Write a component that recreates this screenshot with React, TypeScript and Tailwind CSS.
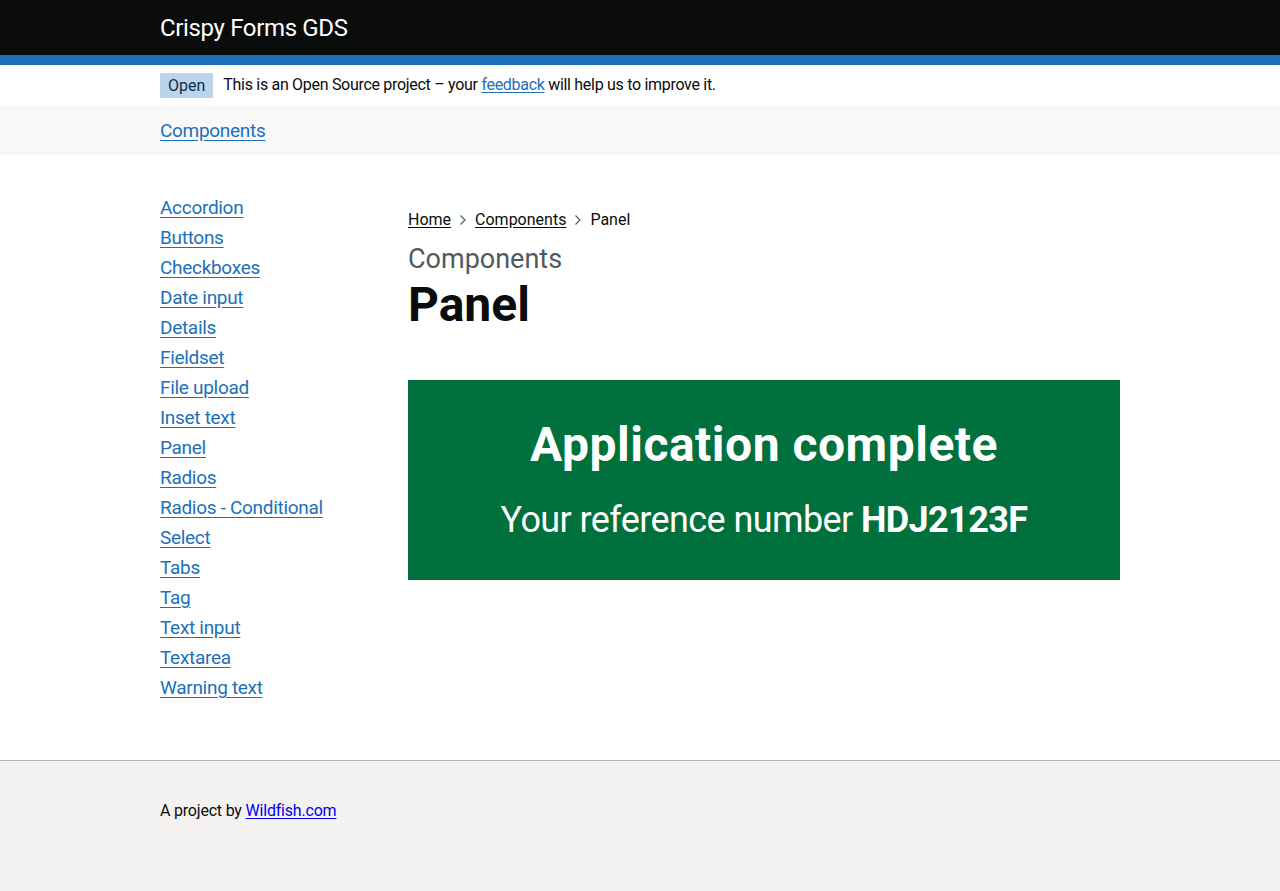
const links = [
  "Accordion",
  "Buttons",
  "Checkboxes",
  "Date input",
  "Details",
  "Fieldset",
  "File upload",
  "Inset text",
  "Panel",
  "Radios",
  "Radios - Conditional",
  "Select",
  "Tabs",
  "Tag",
  "Text input",
  "Textarea",
  "Warning text",
];

function Chevron() {
  return (
    <svg width="8" height="12" viewBox="0 0 8 12" className="mx-[8px] shrink-0" aria-hidden>
      <path d="M1.5 1.5 L6 6 L1.5 10.5" fill="none" stroke="#505a5f" strokeWidth="1.2" />
    </svg>
  );
}

export default function App() {
  return (
    <div className="min-h-[891px] bg-white font-['Roboto',Arial,sans-serif] text-[#0b0c0c]">
      <header className="border-b-[10px] border-[#1d70b8] bg-[#0b0c0c]">
        <div className="mx-auto flex h-[55px] w-[960px] items-center">
          <a href="#" className="text-[24px] leading-[30px] tracking-[-0.35px] text-white">Crispy Forms GDS</a>
        </div>
      </header>

      <div className="mx-auto flex h-[40px] w-[960px] items-center">
        <strong className="mr-[10px] bg-[#bbd4ea] px-2 py-[2px] text-[16px] font-normal leading-[21px] text-[#0c2d4a]">Open</strong>
        <span className="text-[16px] leading-5 tracking-[-0.3px]">
          This is an Open Source project – your{" "}
          <a href="#" className="text-[#1d70b8] underline underline-offset-[2px]">feedback</a> will help us to improve it.
        </span>
      </div>

      <nav className="bg-[#f8f8f8]">
        <div className="mx-auto flex h-[50px] w-[960px] items-center">
          <a href="#" className="text-[19px] leading-[25px] tracking-[-0.3px] text-[#1d70b8] underline underline-offset-[3px]">Components</a>
        </div>
      </nav>

      <main className="mx-auto flex w-[960px] pt-10 pb-[55px]">
        <ul className="w-[248px] shrink-0">
          {links.map((l) => (
            <li key={l} className="mb-[5px] text-[19px] leading-[25px] tracking-[-0.3px]">
              <a href="#" className="text-[#1d70b8] underline underline-offset-[3px]">{l}</a>
            </li>
          ))}
        </ul>

        <div className="flex-1">
          <div className="mt-[15px] flex items-center text-[16px] leading-5">
            <a href="#" className="underline underline-offset-[2px]">Home</a>
            <Chevron />
            <a href="#" className="underline underline-offset-[2px]">Components</a>
            <Chevron />
            <span>Panel</span>
          </div>

          <span className="mt-[14px] block text-[27px] leading-[30px] text-[#505a5f]">Components</span>
          <h1 className="mt-[6px] mb-[50px] text-[48px] font-bold leading-[50px]">Panel</h1>

          <div className="bg-[#00703c] px-10 py-10 text-center text-white">
            <h2 className="mb-[30px] text-[48px] font-bold leading-[50px] tracking-[0.5px]">Application complete</h2>
            <div className="text-[36px] leading-[40px] tracking-[-0.6px]">
              Your reference number <strong className="font-bold">HDJ2123F</strong>
            </div>
          </div>
        </div>
      </main>

      <footer className="border-t border-[#b1b4b6] bg-[#f3f2f1] pt-10 pb-[70px]">
        <div className="mx-auto w-[960px] text-[16px] leading-5 tracking-[-0.2px]">
          A project by <a href="#" className="text-[#0000ee] underline underline-offset-[2px]">Wildfish.com</a>
        </div>
      </footer>
    </div>
  );
}
